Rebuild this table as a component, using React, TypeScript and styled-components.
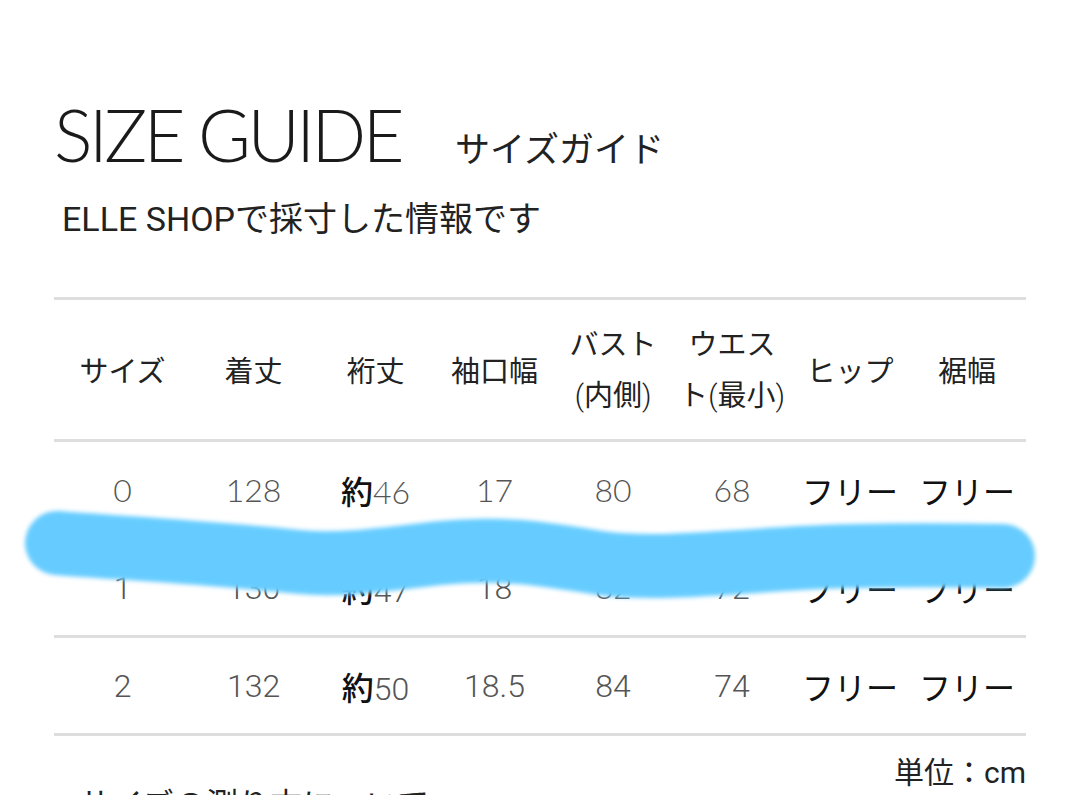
import React from "react";
import styled, { createGlobalStyle } from "styled-components";

const Global = createGlobalStyle`
  html, body { margin: 0; padding: 0; background: #fff; }
  body { font-family: Roboto, "Noto Sans CJK JP", sans-serif; color: #222; }
`;

const Page = styled.div`
  position: relative;
  width: 1080px;
  height: 795px;
  overflow: hidden;
  padding: 98px 54px 0 54px;
  box-sizing: border-box;
`;

const TitleRow = styled.div`
  display: flex;
  align-items: baseline;
  gap: 54px;
`;

const Title = styled.h1`
  margin: 0;
  font-family: Lato, "Noto Sans", sans-serif;
  font-weight: 300;
  font-size: 72px;
  line-height: 72px;
  color: #1a1a1a;
  letter-spacing: -3.5px;
`;

const TitleJa = styled.span`
  font-family: "Noto Sans CJK JP", sans-serif;
  font-size: 35px;
  color: #222;
`;

const Subtitle = styled.p`
  margin: 25px 0 0 8px;
  font-family: Roboto, "Noto Sans CJK JP", sans-serif;
  font-size: 34px;
  line-height: 44px;
  color: #222;
`;

const Table = styled.div`
  margin-top: 56px;
  border-top: 3px solid #dedede;
`;

const Row = styled.div<{ $h: number }>`
  display: grid;
  grid-template-columns: 137px 125px 119px 119px 118px 120px 116px 118px;
  height: ${(p) => p.$h}px;
  align-items: center;
  border-bottom: 3px solid #dedede;
`;

const HeadCell = styled.div`
  text-align: center;
  font-family: "Noto Sans CJK JP", sans-serif;
  font-size: 29px;
  line-height: 51px;
  color: #222;
  white-space: nowrap;
`;

const Paren = styled.span`
  font-family: Roboto, sans-serif;
  font-weight: 300;
`;

const Cell = styled.div<{ $geo?: boolean }>`
  text-align: center;
  font-family: ${(p) => (p.$geo ? "Lato" : "Roboto")}, "Noto Sans CJK JP", sans-serif;
  font-weight: 300;
  font-size: 32px;
  color: #555;
  white-space: nowrap;
`;

const Approx = styled.span`
  font-family: "Noto Sans CJK JP", sans-serif;
  font-weight: 500;
  color: #111;
`;

const Free = styled.span`
  font-family: "Noto Sans CJK JP", sans-serif;
  font-weight: 400;
  color: #111;
  font-size: 32px;
`;

const Unit = styled.div`
  text-align: right;
  margin-top: 22px;
  height: 30px;
  font-family: Roboto, "Noto Sans CJK JP", sans-serif;
  font-size: 30px;
  line-height: 30px;
  color: #222;
`;

const MoreLink = styled.div`
  margin-top: -6px;
  font-family: "Noto Sans CJK JP", sans-serif;
  font-size: 32px;
  line-height: 40px;
  color: #222;
`;

const Scribble = styled.svg`
  position: absolute;
  left: 0;
  top: 0;
  width: 1080px;
  height: 795px;
  pointer-events: none;
`;

const headers: React.ReactNode[] = [
  "サイズ",
  "着丈",
  "裄丈",
  "袖口幅",
  <>
    バスト
    <br />
    <Paren>(</Paren>内側<Paren>)</Paren>
  </>,
  <>
    ウエス
    <br />
    ト<Paren>(</Paren>最小<Paren>)</Paren>
  </>,
  "ヒップ",
  "裾幅",
];

type R = { size: string; len: string; yuki: string; cuff: string; bust: string; waist: string };
const rows: R[] = [
  { size: "0", len: "128", yuki: "46", cuff: "17", bust: "80", waist: "68" },
  { size: "1", len: "130", yuki: "47", cuff: "18", bust: "82", waist: "72" },
  { size: "2", len: "132", yuki: "50", cuff: "18.5", bust: "84", waist: "74" },
];

export default function App() {
  return (
    <>
      <Global />
      <Page>
        <TitleRow>
          <Title>SIZE GUIDE</Title>
          <TitleJa>サイズガイド</TitleJa>
        </TitleRow>
        <Subtitle>ELLE SHOPで採寸した情報です</Subtitle>
        <Table>
          <Row $h={139}>
            {headers.map((h, i) => (
              <HeadCell key={i}>{h}</HeadCell>
            ))}
          </Row>
          {rows.map((r, i) => (
            <Row $h={95} key={r.size}>
              <Cell $geo={i === 0}>{r.size}</Cell>
              <Cell $geo={i === 0}>{r.len}</Cell>
              <Cell $geo={i === 0}>
                <Approx>約</Approx>
                {r.yuki}
              </Cell>
              <Cell $geo={i === 0}>{r.cuff}</Cell>
              <Cell $geo={i === 0}>{r.bust}</Cell>
              <Cell $geo={i === 0}>{r.waist}</Cell>
              <Cell>
                <Free>フリー</Free>
              </Cell>
              <Cell>
                <Free>フリー</Free>
              </Cell>
            </Row>
          ))}
        </Table>
        <Unit>単位：cm</Unit>
        <MoreLink>&gt; サイズの測り方について</MoreLink>
        <Scribble viewBox="0 0 1080 795">
          <defs>
            <filter id="soft" filterUnits="userSpaceOnUse" x="0" y="0" width="1080" height="795">
              <feGaussianBlur stdDeviation="2.2" />
            </filter>
          </defs>
          <path
            d="M57 543 C 120 548, 200 552, 300 562 C 340 566, 380 560, 440 553 C 500 547, 540 553, 600 563 C 650 570, 720 563, 800 558 C 880 554, 950 555, 1003 556"
            fill="none"
            stroke="#66ccff"
            strokeWidth={64}
            strokeLinecap="round"
            filter="url(#soft)"
          />
        </Scribble>
      </Page>
    </>
  );
}
